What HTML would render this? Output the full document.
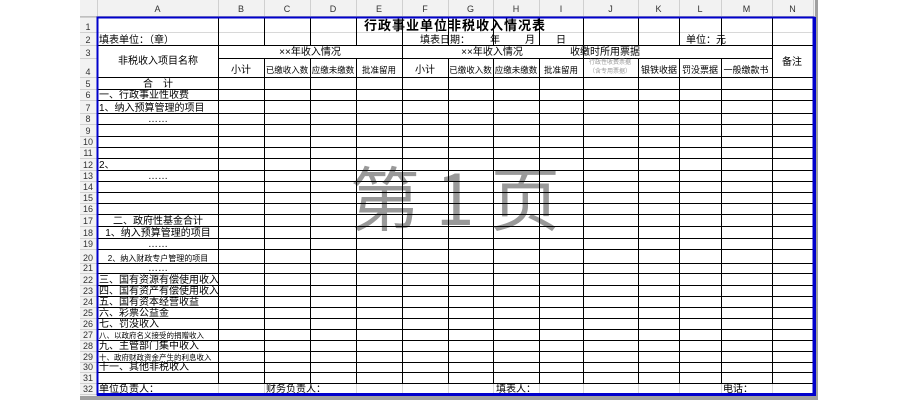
<!DOCTYPE html>
<html><head><meta charset="utf-8"><style>
html,body{margin:0;padding:0;background:#fff;width:900px;height:400px;overflow:hidden}
svg{display:block}
text{font-family:"Liberation Sans","Noto Sans CJK SC","WenQuanYi Zen Hei",sans-serif;font-size:10px;fill:#000}
.h{font-size:9px;fill:#333;text-anchor:middle}
.c{text-anchor:middle}
</style></head><body>
<svg width="900" height="400" viewBox="0 0 900 400" xmlns="http://www.w3.org/2000/svg">
<rect x="80" y="0" width="738" height="17" fill="#f2f2f2"/>
<rect x="80" y="0" width="17" height="400" fill="#f2f2f2"/>
<rect x="80" y="396" width="738" height="4" fill="#a0a0a0"/>
<rect x="815" y="0" width="3" height="400" fill="#a0a0a0"/>
<rect x="97" y="17" width="716" height="377" fill="#fff"/>
<text x="455" y="225" text-anchor="middle" style="font-size:70px;fill:#999;font-family:'Noto Sans CJK SC',sans-serif">第 1 页</text>
<g id="grid"></g>
<g id="txt"></g>
</svg>
<script>
var X=[97,218,264,310,356,402,448,493,539,583,638,679,721,772,813];
var Y=[17,32,45,58,77,89,100,113,124,136,147,158,170,181,192,203,214,226,238,249,263,273,285,296,307,318,329,340,351,362,372,383,394];
var g=document.getElementById('grid'),s='';
function L(x1,y1,x2,y2,c,w){s+='<line x1="'+x1+'" y1="'+y1+'" x2="'+x2+'" y2="'+y2+'" stroke="'+c+'" stroke-width="'+(w||1)+'"/>';}
for(var i=1;i<X.length-1;i++){L(X[i]+.5,17,X[i]+.5,45,'#d8d8d8');L(X[i]+.5,383,X[i]+.5,394,'#d8d8d8');}
L(97,32.5,813,32.5,'#d8d8d8');
for(var r=2;r<=31;r++){
 if(r==3){L(218,58.5,772,58.5,'#000');continue;}
 L(97,Y[r]+.5,813,Y[r]+.5,'#000');}
for(var i=1;i<X.length-1;i++){
 var top=45;
 if(i==2||i==3||i==4||i==6||i==7||i==8||i==10||i==11||i==12) top=58;
 L(X[i]+.5,top,X[i]+.5,383,'#000');
}
// cover merged header cells
s+='<rect x="219" y="46" width="183" height="12" fill="#fff"/>';
s+='<rect x="403" y="46" width="180" height="12" fill="#fff"/>';
s+='<rect x="584" y="46" width="188" height="12" fill="#fff"/>';
for(var i=0;i<X.length;i++){L(X[i]+.5,0,X[i]+.5,17,'#d0d0d0');}
for(var r=0;r<Y.length;r++){L(80,Y[r]+.5,97,Y[r]+.5,'#d0d0d0');}
L(80,16.5,815,16.5,'#c0c0c0');
s+='<rect x="97.5" y="17.5" width="716" height="377" fill="none" stroke="#0000cc" stroke-width="2"/>';
s+='<rect x="813" y="17" width="3" height="379" fill="#0000cc"/>';
s+='<rect x="97" y="393" width="719" height="3" fill="#0000cc"/>';
g.innerHTML=s;
var t='',L2='ABCDEFGHIJKLMN';
for(var i=0;i<14;i++)t+='<text class="h" x="'+(X[i]+X[i+1])/2+'" y="12">'+L2[i]+'</text>';
for(var r=0;r<32;r++)t+='<text class="h" x="88" y="'+(Y[r+1]-2)+'">'+(r+1)+'</text>';
function T(x,y,str,cls,st){t+='<text x="'+x+'" y="'+y+'"'+(cls?' class="'+cls+'"':'')+(st?' style="'+st+'"':'')+'>'+str+'</text>';}
T(455,30,'行政事业单位非税收入情况表','c','font-size:13px;font-weight:bold;letter-spacing:1px');
T(99,43,'填表单位：（章）');T(420,43,'填表日期：');T(490,43,'年');T(525,43,'月');T(556,43,'日');T(686,43,'单位：元');
T(158,64,'非税收入项目名称','c');
T(310,55,'××年收入情况','c');T(492,55,'××年收入情况','c');T(605,55,'收缴时所用票据','c');
T(792,65,'备注','c');
var sub=['小计','已缴收入数','应缴未缴数','批准留用'];
for(var k=0;k<4;k++){T((X[1+k]+X[2+k])/2,73,sub[k],'c',k==0?'':'font-size:8.5px');T((X[5+k]+X[6+k])/2,73,sub[k],'c',k==0?'':'font-size:8.5px');}
T(610,64,'行政性收费票据','c','font-size:6px;fill:#999');T(610,73,'（含专用票据）','c','font-size:6px;fill:#999');
T(659,73,'银铁收据','c','font-size:9px');T(700,73,'罚没票据','c','font-size:9px');T(746,73,'一般缴款书','c','font-size:9px');
var A={5:['合　计','c'],6:['一、行政事业性收费'],7:['1、纳入预算管理的项目'],8:['……','c'],12:['2、'],13:['……','c'],17:['二、政府性基金合计','c'],18:['1、纳入预算管理的项目','c'],19:['……','c'],20:['2、纳入财政专户管理的项目','c','font-size:8px'],21:['……','c'],22:['三、国有资源有偿使用收入'],23:['四、国有资产有偿使用收入'],24:['五、国有资本经营收益'],25:['六、彩票公益金'],26:['七、罚没收入'],27:['八、以政府名义接受的捐赠收入',0,'font-size:7.5px'],28:['九、主管部门集中收入'],29:['十、政府财政资金产生的利息收入',0,'font-size:7.5px'],30:['十一、其他非税收入']};
for(var r in A){var a=A[r];T(a[1]=='c'?158:99,Y[r]-2,a[0],a[1]||'',a[2]||'');}
T(99,392,'单位负责人：');T(266,392,'财务负责人：');T(496,392,'填表人：');T(723,392,'电话：');
document.getElementById('txt').innerHTML=t;
</script>
</body></html>
